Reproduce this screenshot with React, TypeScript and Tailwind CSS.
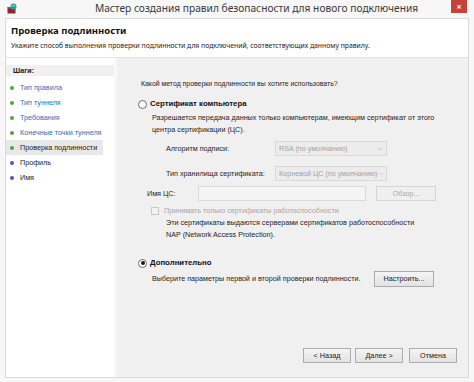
import { ChevronDown } from 'lucide-react'

const steps = [
    { label: 'Тип правила', done: true, link: true },
    { label: 'Тип туннеля', done: true, link: true },
    { label: 'Требования', done: true, link: true },
    { label: 'Конечные точки туннеля', done: true, link: true },
    { label: 'Проверка подлинности', done: true, link: false, active: true },
    { label: 'Профиль', done: false, link: false },
    { label: 'Имя', done: false, link: false },
]

function WizardIcon() {
    return (
        <svg width="11" height="11" viewBox="0 0 11 11">
            <rect x="0.5" y="4" width="8" height="6.5" fill="#8e2a2a" />
            <rect x="0.5" y="4" width="8" height="1.5" fill="#b84545" />
            <circle cx="6.5" cy="3.5" r="3" fill="#2aa39a" />
            <path d="M4.5 3 Q6.5 1.5 8.5 3" stroke="#9be2d8" strokeWidth="0.8" fill="none" />
        </svg>
    )
}

function Radio({ checked }: { checked?: boolean }) {
    return (
        <span className="flex h-[9px] w-[9px] shrink-0 items-center justify-center rounded-full border border-[#6f6f6f] bg-white">
            {checked && <span className="h-[4px] w-[4px] rounded-full bg-[#1a1a1a]" />}
        </span>
    )
}

function Select({ value }: { value: string }) {
    return (
        <div className="flex h-[15px] w-[112px] items-center justify-between border border-[#d9d9d9] bg-[#ececec] pl-[3px] pr-[2px] text-[#a3a3a3]">
            <span>{value}</span>
            <ChevronDown className="h-[8px] w-[8px] text-[#b0b0b0]" strokeWidth={2} />
        </div>
    )
}

function Button({ label, disabled, className }: { label: string; disabled?: boolean; className?: string }) {
    return (
        <div
            className={
                'flex items-center justify-center border ' +
                (disabled
                    ? 'border-[#d5d5d5] bg-[#efefef] text-[#a8a8a8] '
                    : 'border-[#acacac] bg-gradient-to-b from-[#f4f4f4] to-[#e3e3e3] text-[#222] ') +
                (className ?? '')
            }
        >
            {label}
        </div>
    )
}

export default function App() {
    return (
        <div
            className="flex h-[382px] w-[474px] flex-col whitespace-nowrap bg-[#f7f7f7] px-[5px] text-[7.2px] leading-[12px] text-[#1e1e1e]"
            style={{ fontFamily: '"Liberation Sans", Arial, sans-serif' }}
        >
            {/* title bar */}
            <div className="relative flex h-[18px] shrink-0 items-center" style={{ fontFamily: '"Noto Sans", sans-serif' }}>
                <div className="ml-[2px] mt-[-2px]">
                    <WizardIcon />
                </div>
                <div className="ml-[44px] mt-[-2px] flex-1 text-center text-[10.2px] text-[#3a3a3a]">
                    Мастер создания правил безопасности для нового подключения
                </div>
                <div className="mr-[2px] mt-[-5px] flex h-[13px] w-[16px] items-center justify-center bg-[#c7423a] text-[9px] font-bold leading-none text-white">
                    ×
                </div>
            </div>

            <div className="flex flex-1 flex-col border border-[#dadada] bg-white">
                {/* header */}
                <div className="h-[39px] shrink-0 border-b border-[#e3e3e3] pl-[5px]" style={{ fontFamily: '"Noto Sans", sans-serif' }}>
                    <div className="mt-[6px] text-[9.5px] font-bold leading-[12px] text-[#111]">Проверка подлинности</div>
                    <div className="mt-[4px] text-[6.8px] leading-[10px] text-[#222]">
                        Укажите способ выполнения проверки подлинности для подключений, соответствующих данному правилу.
                    </div>
                </div>

                <div className="flex flex-1">
                    {/* steps */}
                    <div className="w-[108px] shrink-0 bg-white pt-[7px]">
                        <div className="flex h-[11px] items-center bg-[#f0f0f0] pl-[7px] font-bold text-[#222]">Шаги:</div>
                        <div className="mt-[4px] flex flex-col">
                            {steps.map(step => (
                                <div
                                    key={step.label}
                                    className={
                                        'flex h-[15px] w-[97px] items-center gap-[6px] pl-[4px] ' +
                                        (step.active ? 'bg-[#e8e8e8]' : '')
                                    }
                                >
                                    <span
                                        className={
                                            'h-[4px] w-[4px] shrink-0 rounded-full ' +
                                            (step.done ? 'bg-[#4fa53a]' : 'bg-[#5b4fc4]')
                                        }
                                    />
                                    <span className={step.link ? 'text-[#2a6fbd]' : 'text-[#222]'}>{step.label}</span>
                                </div>
                            ))}
                        </div>
                    </div>

                    {/* options */}
                    <div className="flex flex-1 flex-col border-l-[3px] border-[#f8f8f8] bg-[#f0f0f0] pr-[11px]">
                        <div className="ml-[24px] mt-[20px] h-[12px] text-[6.9px]">
                            Какой метод проверки подлинности вы хотите использовать?
                        </div>

                        <div className="ml-[21px] mt-[8px] flex h-[12px] items-center gap-[3px]">
                            <Radio />
                            <span className="text-[7.8px] font-bold text-[#111]">Сертификат компьютера</span>
                        </div>
                        <div className="ml-[35px] mt-[2px]">
                            Разрешается передача данных только компьютерам, имеющим сертификат от этого
                            <br />
                            центра сертификации (ЦС).
                        </div>

                        <div className="ml-[49px] mt-[5px] flex h-[15px] items-center">
                            <span className="w-[109px]">Алгоритм подписи:</span>
                            <Select value="RSA (по умолчанию)" />
                        </div>
                        <div className="ml-[49px] mt-[10px] flex h-[15px] items-center">
                            <span className="w-[109px]">Тип хранилища сертификата:</span>
                            <Select value="Корневой ЦС (по умолчанию)" />
                        </div>

                        <div className="ml-[30px] mt-[5px] flex h-[15px] items-center">
                            <span className="w-[51px]">Имя ЦС:</span>
                            <div className="h-[15px] w-[168px] border border-[#d9d9d9] bg-[#f4f4f4]" />
                            <Button label="Обзор..." disabled className="ml-[10px] h-[15px] w-[60px]" />
                        </div>

                        <div className="ml-[34px] mt-[4px] flex h-[12px] items-center gap-[5px] text-[#a6a6a6]">
                            <span className="h-[8px] w-[8px] border border-[#c9c9c9] bg-[#f3f3f3]" />
                            <span>Принимать только сертификаты работоспособности</span>
                        </div>
                        <div className="ml-[49px]">
                            Эти сертификаты выдаются серверами сертификатов работоспособности
                            <br />
                            NAP (Network Access Protection).
                        </div>

                        <div className="ml-[21px] mt-[16px] flex h-[12px] items-center gap-[3px]">
                            <Radio checked />
                            <span className="text-[7.8px] font-bold text-[#111]">Дополнительно</span>
                        </div>
                        <div className="ml-[35px] mt-[1px] flex h-[17px] items-center">
                            <span className="w-[222px]">Выберите параметры первой и второй проверки подлинности.</span>
                            <Button label="Настроить..." className="h-[16px] w-[60px]" />
                        </div>

                        <div className="mb-[14px] mt-auto flex justify-end gap-[4px]">
                            <Button label="< Назад" className="h-[15px] w-[48px]" />
                            <Button label="Далее >" className="h-[15px] w-[48px]" />
                            <Button label="Отмена" className="ml-[2px] h-[15px] w-[48px]" />
                        </div>
                    </div>
                </div>
            </div>
            <div className="h-[4px] shrink-0" />
        </div>
    )
}
